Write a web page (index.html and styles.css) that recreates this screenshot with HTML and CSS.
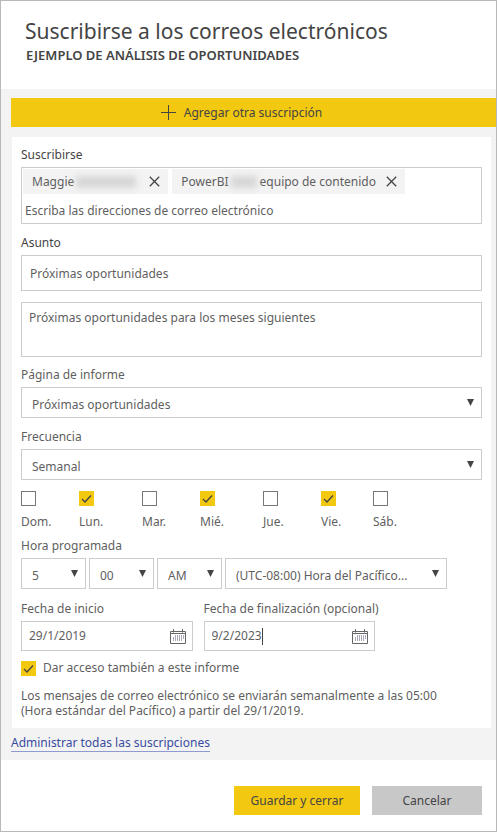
FILE: index.html
```html
<!DOCTYPE html>
<html lang="es">
<head>
<meta charset="utf-8">
<meta name="viewport" content="width=device-width, initial-scale=1">
<title>Suscribirse a los correos electrónicos</title>
<link rel="stylesheet" href="styles.css">
</head>
<body>
<form class="dialog">
  <header class="dialog-header">
    <h1 class="title">Suscribirse a los correos electrónicos</h1>
    <p class="subtitle">EJEMPLO DE ANÁLISIS DE OPORTUNIDADES</p>
  </header>

  <main class="dialog-body">
    <button type="button" class="add-button">
      <svg class="plus" viewBox="0 0 15 15" aria-hidden="true"><path d="M7.5 0v15M0 7.5h15"/></svg>
      Agregar otra suscripción
    </button>

    <section class="card">
      <label class="label strong" for="recipients">Suscribirse</label>
      <div class="recipients">
        <div class="chips">
          <span class="chip">Maggie<span class="redacted wide" aria-hidden="true"></span>
            <button type="button" class="chip-remove" aria-label="Quitar"><svg viewBox="0 0 11 11"><path d="M0.8 0.8l9.4 9.4M10.2 0.8L0.8 10.2"/></svg></button>
          </span>
          <span class="chip">PowerBI<span class="redacted" aria-hidden="true"></span>equipo de contenido
            <button type="button" class="chip-remove" aria-label="Quitar"><svg viewBox="0 0 11 11"><path d="M0.8 0.8l9.4 9.4M10.2 0.8L0.8 10.2"/></svg></button>
          </span>
        </div>
        <input class="recipient-input" id="recipients" type="text" placeholder="Escriba las direcciones de correo electrónico">
      </div>

      <label class="label strong" for="subject">Asunto</label>
      <input class="field subject" id="subject" type="text" value="Próximas oportunidades">
      <textarea class="field message" aria-label="Mensaje">Próximas oportunidades para los meses siguientes</textarea>

      <label class="label" for="page">Página de informe</label>
      <div class="select">
        <select id="page"><option>Próximas oportunidades</option></select>
        <svg class="arrow" viewBox="0 0 7 7" aria-hidden="true"><path d="M0 0h7L3.5 7z"/></svg>
      </div>

      <label class="label" for="frequency">Frecuencia</label>
      <div class="select">
        <select id="frequency"><option>Semanal</option></select>
        <svg class="arrow" viewBox="0 0 7 7" aria-hidden="true"><path d="M0 0h7L3.5 7z"/></svg>
      </div>

      <div class="days">
        <label class="day"><span class="check"><input type="checkbox"><svg viewBox="0 0 15 15" aria-hidden="true"><path d="M3 8l3 3 6-6.5"/></svg></span>Dom.</label>
        <label class="day"><span class="check"><input type="checkbox" checked><svg viewBox="0 0 15 15" aria-hidden="true"><path d="M3 8l3 3 6-6.5"/></svg></span>Lun.</label>
        <label class="day"><span class="check"><input type="checkbox"><svg viewBox="0 0 15 15" aria-hidden="true"><path d="M3 8l3 3 6-6.5"/></svg></span>Mar.</label>
        <label class="day"><span class="check"><input type="checkbox" checked><svg viewBox="0 0 15 15" aria-hidden="true"><path d="M3 8l3 3 6-6.5"/></svg></span>Mié.</label>
        <label class="day"><span class="check"><input type="checkbox"><svg viewBox="0 0 15 15" aria-hidden="true"><path d="M3 8l3 3 6-6.5"/></svg></span>Jue.</label>
        <label class="day"><span class="check"><input type="checkbox" checked><svg viewBox="0 0 15 15" aria-hidden="true"><path d="M3 8l3 3 6-6.5"/></svg></span>Vie.</label>
        <label class="day"><span class="check"><input type="checkbox"><svg viewBox="0 0 15 15" aria-hidden="true"><path d="M3 8l3 3 6-6.5"/></svg></span>Sáb.</label>
      </div>

      <label class="label time-label" for="hour">Hora programada</label>
      <div class="times">
        <div class="select">
          <select id="hour"><option>5</option></select>
          <svg class="arrow" viewBox="0 0 7 7" aria-hidden="true"><path d="M0 0h7L3.5 7z"/></svg>
        </div>
        <div class="select">
          <select aria-label="Minutos"><option>00</option></select>
          <svg class="arrow" viewBox="0 0 7 7" aria-hidden="true"><path d="M0 0h7L3.5 7z"/></svg>
        </div>
        <div class="select">
          <select aria-label="AM o PM"><option>AM</option></select>
          <svg class="arrow" viewBox="0 0 7 7" aria-hidden="true"><path d="M0 0h7L3.5 7z"/></svg>
        </div>
        <div class="select">
          <select aria-label="Zona horaria"><option>(UTC-08:00) Hora del Pacífico...</option></select>
          <svg class="arrow" viewBox="0 0 7 7" aria-hidden="true"><path d="M0 0h7L3.5 7z"/></svg>
        </div>
      </div>

      <div class="dates">
        <div class="date">
          <label class="label" for="start">Fecha de inicio</label>
          <div class="date-box">
            <input id="start" type="text" value="29/1/2019">
            <button type="button" class="calendar" aria-label="Abrir calendario"><svg viewBox="0 0 16 15"><path class="cells" d="M5.5 6v6M7.5 6v6M9.5 6v6M11.5 6v6M13.500 6v4M3.500 8v4"/><path d="M.5 2.500h15v12H.5zM.5 4.500h15M3.500 0v3.500M12.500 0v3.500"/></svg></button>
          </div>
        </div>
        <div class="date">
          <label class="label" for="end">Fecha de finalización (opcional)</label>
          <div class="date-box">
            <input id="end" type="text" value="9/2/2023"><span class="caret"></span>
            <button type="button" class="calendar" aria-label="Abrir calendario"><svg viewBox="0 0 16 15"><path class="cells" d="M5.5 6v6M7.5 6v6M9.5 6v6M11.5 6v6M13.500 6v4M3.500 8v4"/><path d="M.5 2.500h15v12H.5zM.5 4.500h15M3.500 0v3.500M12.500 0v3.500"/></svg></button>
          </div>
        </div>
      </div>

      <label class="access"><span class="check"><input type="checkbox" checked><svg viewBox="0 0 15 15" aria-hidden="true"><path d="M3 8l3 3 6-6.5"/></svg></span>Dar acceso también a este informe</label>
      <p class="summary">Los mensajes de correo electrónico se enviarán semanalmente a las 05:00 (Hora estándar del Pacífico) a partir del 29/1/2019.</p>
    </section>

    <a class="manage" href="#">Administrar todas las suscripciones</a>
  </main>

  <footer class="dialog-footer">
    <button type="submit" class="button primary">Guardar y cerrar</button>
    <button type="button" class="button">Cancelar</button>
  </footer>
</form>
</body>
</html>
```
FILE: styles.css
```css
* {
  box-sizing: border-box;
}

body {
  margin: 0;
  background: #fff;
  color: #5f5f5f;
  font: 12px/20px "Segoe UI", "Noto Sans", "Open Sans", sans-serif;
}

input,
textarea,
select,
button {
  margin: 0;
  padding: 0;
  border: 0;
  border-radius: 0;
  outline: 0;
  background: none;
  color: inherit;
  font: inherit;
}

svg {
  display: block;
  fill: none;
  stroke: #444;
}

.dialog {
  display: flex;
  flex-direction: column;
  min-height: 100vh;
  border: 1px solid #b8b8b8;
}

.dialog-header {
  padding: 15px 24px 25px;
  color: #444;
}

.title {
  margin: 0;
  font-size: 21px;
  line-height: 30px;
  font-weight: 400;
}

.subtitle {
  margin: 0;
  padding-left: 1px;
  font-size: 13px;
  line-height: 18px;
  font-weight: 600;
}

.dialog-body {
  padding: 9px 0 7px 10px;
  background: #f3f3f3;
}

.add-button {
  display: flex;
  align-items: center;
  justify-content: center;
  gap: 8px;
  width: 100%;
  height: 29px;
  padding-right: 24px;
  background: #f2c811;
  color: #444;
}

.plus {
  width: 15px;
  height: 15px;
}

.card {
  margin: 10px 5px 0 1px;
  padding: 8px 9px 10px;
  background: #fff;
}

.label {
  display: block;
  margin: 9px 0 2px;
  white-space: nowrap;
}

.label.strong {
  color: #444;
}

.card > .label:first-child {
  margin-top: 0;
}

.recipients,
.field,
.select select,
.date-box {
  border: 1px solid #ccc;
}

.recipients {
  height: 57px;
  padding: 1px;
}

.chips {
  display: flex;
  gap: 4px;
}

.chip {
  display: flex;
  align-items: center;
  height: 25px;
  padding: 0 8px 0 9px;
  background: #f3f3f3;
  white-space: nowrap;
}

.redacted {
  width: 26px;
  height: 12px;
  margin: 0 3px 0 2px;
  background: #d6d6d6;
  filter: blur(3px);
}

.redacted.wide {
  width: 60px;
}

.chip-remove {
  margin-left: 10px;
}

.chip-remove svg {
  width: 11px;
  height: 11px;
  stroke-width: 1.3;
}

.recipient-input {
  display: block;
  width: 100%;
  height: 28px;
  padding: 4px 2px 0;
}

.recipient-input::placeholder {
  color: inherit;
  opacity: 1;
}

.field {
  display: block;
  width: 100%;
}

.subject {
  height: 36px;
  padding: 0 8px;
}

.message {
  height: 55px;
  margin-top: 11px;
  padding: 5px 7px;
  resize: none;
}

.message + .label {
  margin-top: 8px;
}

.select {
  display: grid;
  align-items: center;
}

.select > * {
  grid-area: 1 / 1;
}

.select select {
  appearance: none;
  width: 100%;
  height: 31px;
  padding: 5px 20px 0 10px;
}

.arrow {
  width: 7px;
  height: 7px;
  margin-right: 8px;
  justify-self: end;
  pointer-events: none;
  fill: #444;
  stroke: none;
}

.days {
  display: grid;
  grid-template-columns: 58fr 63fr 58fr 63fr 58fr 52fr 109fr;
  margin-top: 11px;
}

.day {
  display: flex;
  flex-direction: column;
  gap: 6px;
}

.check {
  display: grid;
  flex: none;
  width: 15px;
  height: 15px;
}

.check > * {
  grid-area: 1 / 1;
  width: 15px;
  height: 15px;
}

.check input {
  appearance: none;
  border: 1px solid #777;
}

.check svg {
  visibility: hidden;
  pointer-events: none;
  stroke-width: 1.3;
}

.check input:checked {
  border-color: #f2c811;
  background: #f2c811;
}

.check input:checked + svg {
  visibility: visible;
}

.time-label {
  margin-top: 4px;
}

.times {
  display: grid;
  grid-template-columns: 65fr 65fr 65fr 222fr;
  gap: 3px;
  margin-right: 35px;
}

.dates {
  display: grid;
  grid-template-columns: repeat(2, minmax(0, 1fr));
  gap: 11px;
  margin: 10px 107px 0 0;
}

.date .label {
  margin-top: 0;
}

.date-box {
  display: flex;
  align-items: center;
  height: 30px;
  padding: 0 6px 0 7px;
}

.date-box input {
  field-sizing: content;
  min-width: 0;
}

.caret {
  width: 1px;
  height: 17px;
  background: #444;
}

.calendar {
  margin-left: auto;
}

.calendar svg {
  width: 16px;
  height: 15px;
  stroke: #666;
}

.calendar .cells {
  stroke: #aab;
}

.access {
  display: flex;
  align-items: center;
  gap: 7px;
  margin-top: 7px;
}

.summary {
  margin: 10px 0 0;
  padding-right: 32px;
  line-height: 15px;
}

.manage {
  display: inline-block;
  margin-top: 6px;
  border-bottom: 1px solid #8f9bd0;
  color: #3a4ba0;
  line-height: 17px;
  text-decoration: none;
}

.dialog-footer {
  display: flex;
  justify-content: flex-end;
  gap: 12px;
  padding: 26px 14px 16px;
}

.button {
  width: 110px;
  height: 29px;
  background: #c8c8c8;
  color: #444;
}

.button.primary {
  width: 126px;
  background: #f2c811;
}
```
